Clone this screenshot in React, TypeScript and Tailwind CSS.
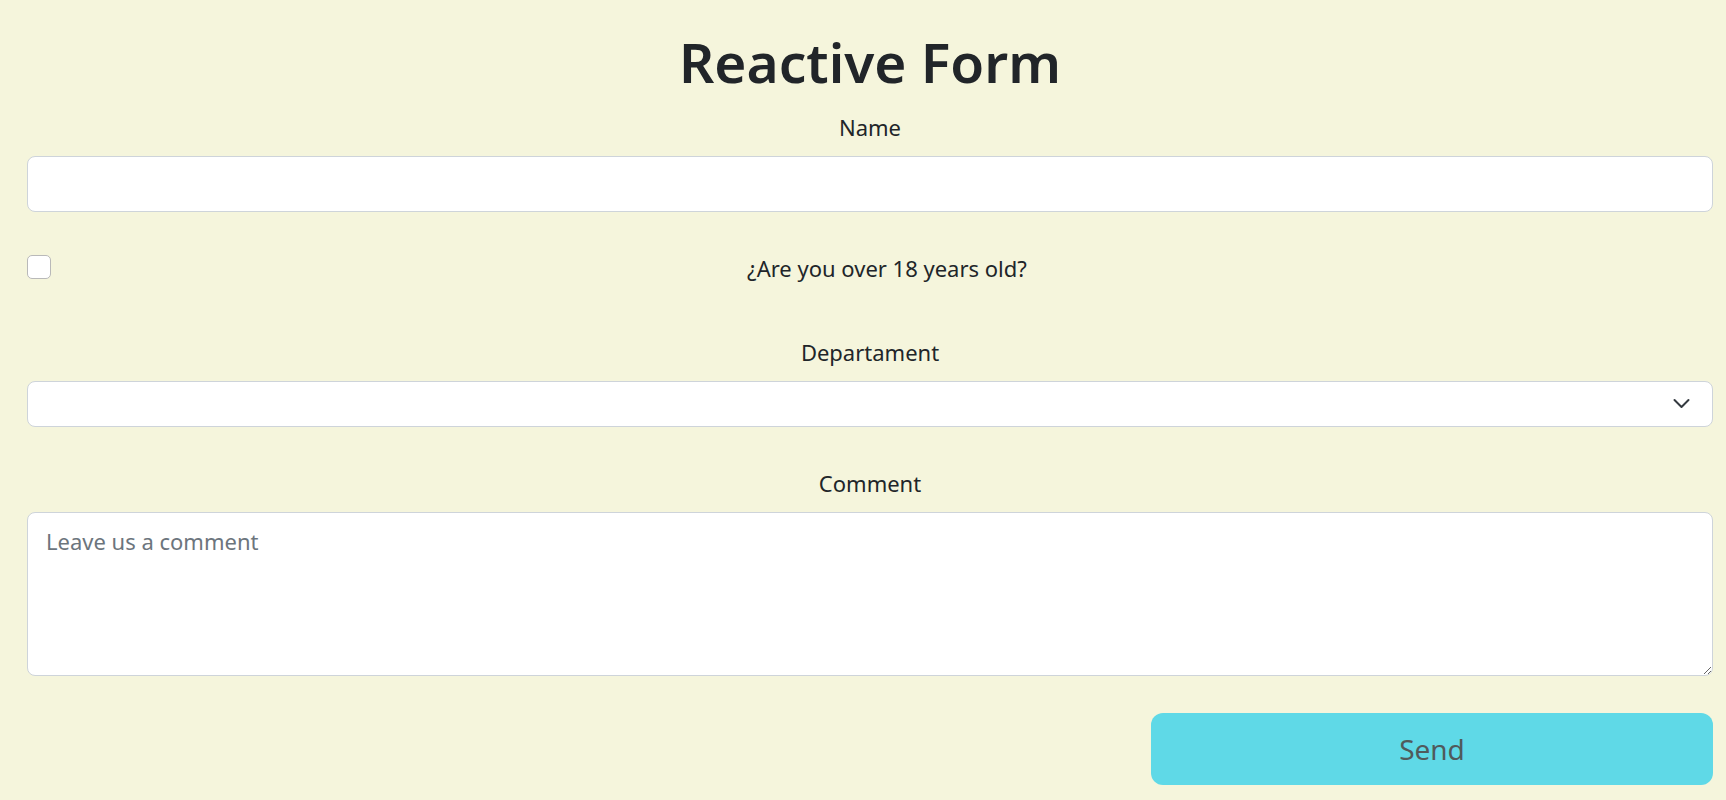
import { useState } from 'react';

const departments = ['', 'Sales', 'Marketing', 'Engineering'];

export default function App() {
  const [adult, setAdult] = useState(false);

  return (
    <div className="min-h-screen bg-[#f5f5dc] pl-[27px] pr-[13px] font-['Noto_Sans',sans-serif] text-[#212529]">
      <form onSubmit={(e) => e.preventDefault()} className="flex flex-col">
        <h1 className="pt-[28px] text-center text-[55px] font-semibold leading-[67px]">Reactive Form</h1>

        {/* Name */}
        <label htmlFor="name" className="mt-[16px] text-center text-[22px] leading-[33px]">Name</label>
        <input
          id="name"
          type="text"
          className="mt-[12px] h-[56px] w-full rounded-[8px] border border-[#ced4da] bg-white px-[18px] text-[22px] outline-none"
        />

        {/* Age check */}
        <div className="mt-[38px] flex items-center">
          <input
            type="checkbox"
            checked={adult}
            onChange={() => setAdult(!adult)}
            className="h-[24px] w-[24px] shrink-0 appearance-none rounded-[5px] border border-[#b9b9b9] bg-white"
          />
          <span className="ml-[10px] flex-1 translate-y-[2px] text-center text-[22px] leading-[33px]">¿Are you over 18 years old?</span>
        </div>

        {/* Department */}
        <label htmlFor="dept" className="mt-[53px] text-center text-[22px] leading-[33px]">Departament</label>
        <div className="relative mt-[12px]">
          <select
            id="dept"
            className="h-[46px] w-full appearance-none rounded-[8px] border border-[#ced4da] bg-white px-[18px] text-[22px] outline-none"
          >
            {departments.map((d) => (
              <option key={d} value={d}>{d}</option>
            ))}
          </select>
          <svg
            className="pointer-events-none absolute right-[23px] top-[17px] h-[12px] w-[17px]"
            viewBox="0 0 17 12"
            fill="none"
            stroke="#343a40"
            strokeWidth="2"
            strokeLinecap="round"
            strokeLinejoin="round"
          >
            <path d="M1.5 2 8.5 9 15.5 2" />
          </svg>
        </div>

        {/* Comment */}
        <label htmlFor="comment" className="mt-[40px] text-center text-[22px] leading-[33px]">Comment</label>
        <textarea
          id="comment"
          placeholder="Leave us a comment"
          className="mt-[12px] h-[164px] w-full rounded-[8px] border border-[#ced4da] bg-white px-[18px] py-[12px] text-[22px] leading-[33px] outline-none placeholder:text-[#6c757d]"
        />

        {/* Submit */}
        <div className="mt-[37px] grid grid-cols-3">
          <button
            type="submit"
            className="col-start-3 h-[72px] rounded-[12px] bg-[#5fd9e7] text-[28px] text-[#505a5c]"
          >
            Send
          </button>
        </div>
      </form>
    </div>
  );
}
